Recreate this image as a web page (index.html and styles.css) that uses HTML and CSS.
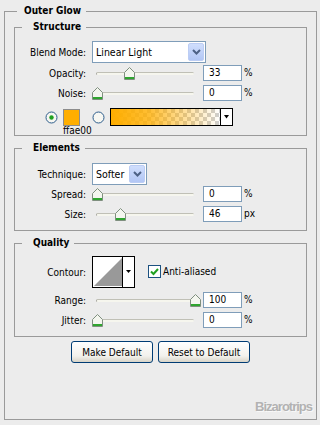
FILE: index.html
```html
<!DOCTYPE html>
<html lang="en">
<head>
    <meta charset="UTF-8">
    <title>Outer Glow</title>
    <link rel="stylesheet" href="styles.css">
</head>
<body>
    <fieldset class="panel">
        <legend>Outer Glow</legend>

        <fieldset class="group structure">
            <legend>Structure</legend>
            <div class="row row-select">
                <label class="lbl">Blend Mode:</label>
                <div class="select select-wide">
                    <span class="select-text">Linear Light</span>
                    <span class="select-btn"><svg width="9" height="6" viewBox="0 0 9 6"><path d="M1 1 L4.5 4.5 L8 1" fill="none" stroke="#4d6185" stroke-width="2"/></svg></span>
                </div>
            </div>
            <div class="row row-slider opacity">
                <label class="lbl">Opacity:</label>
                <div class="slider"><div class="track"></div><span class="thumb" style="left:32px"><svg width="11" height="13" viewBox="0 0 11 13"><path d="M0.5 5.5 L5.5 0.5 L10.5 5.5 V12.5 H0.5 Z" fill="#f4f6ef" stroke="#7f8f7f"/><rect x="1" y="10" width="9" height="2" fill="#2fa52f"/></svg></span></div>
                <div class="num">33</div><span class="unit">%</span>
            </div>
            <div class="row row-slider noise">
                <label class="lbl">Noise:</label>
                <div class="slider"><div class="track"></div><span class="thumb" style="left:0px"><svg width="11" height="13" viewBox="0 0 11 13"><path d="M0.5 5.5 L5.5 0.5 L10.5 5.5 V12.5 H0.5 Z" fill="#f4f6ef" stroke="#7f8f7f"/><rect x="1" y="10" width="9" height="2" fill="#2fa52f"/></svg></span></div>
                <div class="num">0</div><span class="unit">%</span>
            </div>
            <div class="row row-color">
                <span class="radio"><svg width="13" height="13" viewBox="0 0 13 13"><circle cx="6.5" cy="6.5" r="5.5" fill="#f7f7f2" stroke="#2d5d8c"/><circle cx="6.5" cy="6.5" r="2.2" fill="#21a121"/></svg></span>
                <div class="swatch-col">
                    <div class="swatch"></div>
                    <div class="hex">ffae00</div>
                </div>
                <span class="radio radio-2"><svg width="13" height="13" viewBox="0 0 13 13"><circle cx="6.5" cy="6.5" r="5.5" fill="#f7f7f2" stroke="#2d5d8c"/></svg></span>
                <div class="gradient">
                    <div class="gradient-fill"></div>
                    <span class="gradient-btn"><svg width="5" height="4" viewBox="0 0 5 4"><path d="M0 0 H5 L2.5 3.5 Z" fill="#000"/></svg></span>
                </div>
            </div>
        </fieldset>

        <fieldset class="group elements">
            <legend>Elements</legend>
            <div class="row row-select">
                <label class="lbl">Technique:</label>
                <div class="select select-small">
                    <span class="select-text">Softer</span>
                    <span class="select-btn"><svg width="9" height="6" viewBox="0 0 9 6"><path d="M1 1 L4.5 4.5 L8 1" fill="none" stroke="#4d6185" stroke-width="2"/></svg></span>
                </div>
            </div>
            <div class="row row-slider spread">
                <label class="lbl">Spread:</label>
                <div class="slider"><div class="track"></div><span class="thumb" style="left:0px"><svg width="11" height="13" viewBox="0 0 11 13"><path d="M0.5 5.5 L5.5 0.5 L10.5 5.5 V12.5 H0.5 Z" fill="#f4f6ef" stroke="#7f8f7f"/><rect x="1" y="10" width="9" height="2" fill="#2fa52f"/></svg></span></div>
                <div class="num">0</div><span class="unit">%</span>
            </div>
            <div class="row row-slider size">
                <label class="lbl">Size:</label>
                <div class="slider"><div class="track"></div><span class="thumb" style="left:23px"><svg width="11" height="13" viewBox="0 0 11 13"><path d="M0.5 5.5 L5.5 0.5 L10.5 5.5 V12.5 H0.5 Z" fill="#f4f6ef" stroke="#7f8f7f"/><rect x="1" y="10" width="9" height="2" fill="#2fa52f"/></svg></span></div>
                <div class="num">46</div><span class="unit">px</span>
            </div>
        </fieldset>

        <fieldset class="group quality">
            <legend>Quality</legend>
            <div class="row row-contour">
                <label class="lbl">Contour:</label>
                <span class="contour"><svg width="43" height="32" viewBox="0 0 43 32"><rect x="0.5" y="0.5" width="42" height="31" fill="#fff" stroke="#000"/><path d="M2 30 L30 2 V30 Z" fill="#999"/><line x1="30.5" y1="1" x2="30.5" y2="31" stroke="#000"/><path d="M34 14 H39 L36.5 17 Z" fill="#000"/></svg></span>
                <span class="check"><svg width="13" height="13" viewBox="0 0 13 13"><rect x="0.5" y="0.5" width="12" height="12" fill="#fff" stroke="#1c5180"/><path d="M3 6.5 L5.5 9 L10 4" fill="none" stroke="#21a121" stroke-width="2"/></svg></span>
                <span class="check-text">Anti-aliased</span>
            </div>
            <div class="row row-slider range">
                <label class="lbl">Range:</label>
                <div class="slider"><div class="track"></div><span class="thumb" style="left:98px"><svg width="11" height="13" viewBox="0 0 11 13"><path d="M0.5 5.5 L5.5 0.5 L10.5 5.5 V12.5 H0.5 Z" fill="#f4f6ef" stroke="#7f8f7f"/><rect x="1" y="10" width="9" height="2" fill="#2fa52f"/></svg></span></div>
                <div class="num">100</div><span class="unit">%</span>
            </div>
            <div class="row row-slider jitter">
                <label class="lbl">Jitter:</label>
                <div class="slider"><div class="track"></div><span class="thumb" style="left:0px"><svg width="11" height="13" viewBox="0 0 11 13"><path d="M0.5 5.5 L5.5 0.5 L10.5 5.5 V12.5 H0.5 Z" fill="#f4f6ef" stroke="#7f8f7f"/><rect x="1" y="10" width="9" height="2" fill="#2fa52f"/></svg></span></div>
                <div class="num">0</div><span class="unit">%</span>
            </div>
        </fieldset>

        <div class="buttons">
            <button class="btn btn-make">Make Default</button>
            <button class="btn btn-reset">Reset to Default</button>
        </div>

        <div class="watermark">Bizarotrips</div>
    </fieldset>
</body>
</html>
```

FILE: styles.css
```css
* {
    margin: 0;
    padding: 0;
    box-sizing: border-box;
}

body {
    background: #ececec;
    font-family: "DejaVu Sans Condensed", "DejaVu Sans", sans-serif;
    font-size: 10px;
    color: #000;
}

.panel {
    margin: 4px 0 0 4px;
    width: 313px;
    border: 1px solid #9a9a9a;
    padding: 0 9px 5px 9px;
}

legend {
    font-weight: bold;
    line-height: 14px;
}

.panel > legend {
    margin-left: 3px;
    padding: 0 5px 0 7px;
}

.group {
    border: 1px solid #9a9a9a;
    padding: 0;
}

.group > legend {
    margin-left: 7px;
    padding: 0 5px 0 11px;
}

.structure {
    margin-top: 2px;
    padding-top: 7px;
}

.elements {
    margin-top: 5px;
    padding: 8px 0 8px 0;
}

.quality {
    margin-top: 5px;
    padding: 6px 0 8px 0;
}

/* rows */
.row {
    display: flex;
    align-items: center;
}

.lbl {
    width: 71px;
    margin-right: 6px;
    text-align: right;
}

.row-select {
    height: 22px;
}

.row-slider {
    height: 16px;
}

.opacity { margin-top: 2px; }
.noise { margin-top: 4px; }
.spread { margin-top: 1px; }
.size { margin-top: 4px; }
.range { margin-top: 4px; }
.jitter { margin-top: 4px; }

/* select boxes */
.select {
    height: 22px;
    border: 1px solid #7f9db9;
    background: #fff;
    display: flex;
    align-items: center;
    justify-content: space-between;
    padding: 0 1px 0 3px;
}

.select-wide {
    width: 114px;
}

.select-small {
    width: 55px;
}

.select-text {
    font-size: 10.5px;
}

.select-btn {
    width: 16px;
    height: 18px;
    border: 1px solid #bccdf4;
    border-radius: 2px;
    background: linear-gradient(#d0defd, #b2c6f5);
    display: flex;
    align-items: center;
    justify-content: center;
}

/* sliders */
.slider {
    position: relative;
    width: 107px;
    height: 16px;
    margin-right: 4px;
}

.track {
    position: absolute;
    left: 4px;
    right: 5px;
    top: 7px;
    height: 3px;
    background: #f6f6ee;
    border-top: 1px solid #c0c0b6;
    border-left: 1px solid #a8a8a0;
    border-radius: 2px;
}

.thumb {
    position: absolute;
    top: 2px;
    width: 11px;
    height: 13px;
    display: block;
}

.thumb svg {
    display: block;
}

.num {
    width: 39px;
    height: 16px;
    border: 1px solid #7f9db9;
    background: #fff;
    padding-left: 5px;
    line-height: 14px;
}

.unit {
    margin-left: 2px;
    margin-top: 2px;
    align-self: flex-start;
    line-height: 12px;
}

/* colour row */
.row-color {
    margin-top: 7px;
    padding-left: 30px;
    align-items: flex-start;
    height: 27px;
}

.radio {
    display: block;
    width: 13px;
    height: 13px;
    margin-top: 3px;
}

.radio svg {
    display: block;
}

.swatch-col {
    width: 24px;
    margin-left: 5px;
    margin-top: 1px;
}

.swatch {
    width: 17px;
    height: 17px;
    background: #ffae00;
    border: 1px solid #8c8c8c;
}

.hex {
    line-height: 10px;
    white-space: nowrap;
}

.radio-2 {
    margin-left: 5px;
}

.gradient {
    width: 123px;
    height: 18px;
    margin-left: 5px;
    border: 1px solid #000;
    display: flex;
}

.gradient-fill {
    flex: 1;
    background:
        linear-gradient(to right, #ffae00 0%, rgba(255, 174, 0, 0.8) 35%, rgba(255, 174, 0, 0) 100%),
        repeating-conic-gradient(#cfcfcf 0 25%, #fff 0 50%) 0 0 / 8px 8px;
}

.gradient-btn {
    width: 12px;
    border-left: 1px solid #000;
    background: #fff;
    display: flex;
    align-items: center;
    justify-content: center;
}

.gradient-btn svg {
    display: block;
}

/* contour row */
.row-contour {
    height: 32px;
}

.contour svg {
    display: block;
}

.check {
    margin-left: 13px;
    margin-top: -2px;
}

.check svg {
    display: block;
}

.check-text {
    margin-left: 2px;
    margin-top: -2px;
}

/* buttons */
.buttons {
    display: flex;
    justify-content: center;
    gap: 5px;
    margin-top: 4px;
}

.btn {
    height: 22px;
    border: 1px solid #003c74;
    border-radius: 3px;
    background: linear-gradient(#ffffff, #f2f1ec 70%, #d8d4c8);
    font-family: inherit;
    font-size: 10px;
    color: #000;
}

.btn-make {
    width: 82px;
}

.btn-reset {
    width: 92px;
}

.watermark {
    margin-top: 37px;
    margin-right: -5px;
    text-align: right;
    font-family: "Liberation Sans", Arial, sans-serif;
    font-weight: bold;
    font-size: 13px;
    line-height: 14px;
    letter-spacing: -1px;
    color: #b2b2b2;
    text-shadow: 1px 1px 0 #f8f8f8;
}
```
